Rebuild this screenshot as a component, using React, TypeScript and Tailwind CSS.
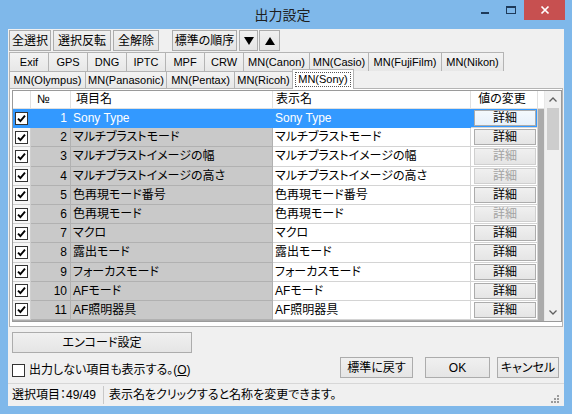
import React from "react";

type Row = { no: number; name: string; enabled: boolean };

const rows: Row[] = [
  { no: 1, name: "Sony Type", enabled: true },
  { no: 2, name: "マルチブラストモード", enabled: true },
  { no: 3, name: "マルチブラストイメージの幅", enabled: false },
  { no: 4, name: "マルチブラストイメージの高さ", enabled: false },
  { no: 5, name: "色再現モード番号", enabled: true },
  { no: 6, name: "色再現モード", enabled: false },
  { no: 7, name: "マクロ", enabled: true },
  { no: 8, name: "露出モード", enabled: true },
  { no: 9, name: "フォーカスモード", enabled: true },
  { no: 10, name: "AFモード", enabled: true },
  { no: 11, name: "AF照明器具", enabled: true },
];

const tabs1 = [
  { label: "Exif", w: "w-[40px]" },
  { label: "GPS", w: "w-[40px]" },
  { label: "DNG", w: "w-[40px]" },
  { label: "IPTC", w: "w-[40px]" },
  { label: "MPF", w: "w-[40px]" },
  { label: "CRW", w: "w-[40px]" },
  { label: "MN(Canon)", w: "w-[67px]" },
  { label: "MN(Casio)", w: "w-[60px]" },
  { label: "MN(FujiFilm)", w: "w-[74px]" },
  { label: "MN(Nikon)", w: "w-[63px]" },
];

const tabs2 = [
  { label: "MN(Olympus)", w: "w-[77px]" },
  { label: "MN(Panasonic)", w: "w-[82px]" },
  { label: "MN(Pentax)", w: "w-[69px]" },
  { label: "MN(Ricoh)", w: "w-[59px]" },
];

const Btn = ({
  children,
  className = "",
}: {
  children: React.ReactNode;
  className?: string;
}) => (
  <div
    className={`flex items-center justify-center whitespace-nowrap border border-[#acacac] bg-gradient-to-b from-[#f0f0f0] to-[#e5e5e5] text-[12px] leading-none ${className}`}
  >
    {children}
  </div>
);

const Check = ({ checked }: { checked: boolean }) => (
  <span className="flex h-[13px] w-[13px] items-center justify-center border border-[#333333] bg-white">
    {checked && (
      <svg width="9" height="9" viewBox="0 0 9 9">
        <path d="M1 4.6 L3.4 7 L8 1.6" stroke="#000" strokeWidth="1.9" fill="none" />
      </svg>
    )}
  </span>
);

const Tab = ({ label, w }: { label: string; w: string }) => (
  <div
    className={`${w} -ml-px flex h-full items-center justify-center whitespace-nowrap border border-b-0 border-[#b4b4b4] bg-gradient-to-b from-[#f3f3f3] to-[#e7e7e7] text-[11px] leading-none first:ml-0`}
  >
    {label}
  </div>
);

export default function App() {
  return (
    <div className="flex h-[414px] w-[572px] flex-col overflow-hidden bg-[#7fb8ea] font-['Liberation_Sans','Noto_Sans_CJK_JP',sans-serif] text-black [font-feature-settings:'palt']">
      {/* title bar */}
      <div className="flex h-[29px] items-start">
        <div className="flex-1" />
        <div className="pt-[4px] font-['Noto_Sans_CJK_JP',sans-serif] text-[14px] leading-[20px] text-[#1e1e1e] [font-feature-settings:normal]">
          出力設定
        </div>
        <div className="flex flex-1 justify-end pr-[7px]">
          <div className="flex h-[20px] w-[26px] items-center justify-center">
            <span className="mt-[6px] h-[2px] w-[8px] bg-[#1e3a5a]" />
          </div>
          <div className="flex h-[20px] w-[26px] items-center justify-center">
            <span className="h-[8px] w-[10px] border border-t-2 border-[#1e3a5a]" />
          </div>
          <div className="flex h-[20px] w-[41px] items-center justify-center bg-[#c75050]">
            <svg width="10" height="10" viewBox="0 0 10 10">
              <path d="M1.5 1.5 L8.5 8.5 M8.5 1.5 L1.5 8.5" stroke="#fff" strokeWidth="1.7" />
            </svg>
          </div>
        </div>
      </div>

      {/* client */}
      <div className="mx-[8px] mb-[8px] flex flex-1 flex-col bg-[#f0f0f0]">
        {/* toolbar */}
        <div className="ml-[1px] mt-[1px] flex h-[21px]">
          <Btn className="w-[42px]">全選択</Btn>
          <Btn className="ml-[2px] w-[58px]">選択反転</Btn>
          <Btn className="ml-[2px] w-[46px]">全解除</Btn>
          <Btn className="ml-[13px] w-[65px]">標準の順序</Btn>
          <Btn className="ml-[2px] w-[19px]">
            <svg width="10" height="8" viewBox="0 0 10 8">
              <path d="M0 0 H10 L5 8 Z" fill="#000" />
            </svg>
          </Btn>
          <Btn className="ml-[1px] w-[21px]">
            <svg width="10" height="8" viewBox="0 0 10 8">
              <path d="M0 8 H10 L5 0 Z" fill="#000" />
            </svg>
          </Btn>
        </div>

        {/* tabs */}
        <div className="ml-[1px] mt-[1px] flex h-[19px]">
          {tabs1.map((t) => (
            <Tab key={t.label} {...t} />
          ))}
        </div>
        <div className="ml-[1px] flex h-[17px] items-end">
          {tabs2.map((t) => (
            <Tab key={t.label} {...t} />
          ))}
          <div className="relative z-10 -mb-px -ml-px flex h-[20px] w-[62px] items-center justify-center border border-b-0 border-[#b4b4b4] bg-white">
            <span className="border border-dotted border-[#555] px-[2px] text-[11px] leading-[13px]">
              MN(Sony)
            </span>
          </div>
        </div>

        {/* tab panel */}
        <div className="ml-[1px] h-[239px] w-[554px] border border-[#b4b4b4] bg-white pl-[2px] pt-[1px]">
          <div className="flex h-[232px] w-[550px] overflow-hidden border border-[#9a9a9a] bg-[#ababab]">
            <div className="flex w-[531px] flex-col">
              {/* header */}
              <div className="flex h-[18px] shrink-0 bg-white text-[12px] leading-[17px]">
                <div className="w-[18px] border-b border-r border-[#e0e0e0]" />
                <div className="w-[40px] border-b border-r border-[#e0e0e0] pl-[6px]">№</div>
                <div className="w-[202px] border-b border-r border-[#e0e0e0] pl-[5px]">項目名</div>
                <div className="w-[198px] border-b border-r border-[#e0e0e0] pl-[3px]">表示名</div>
                <div className="w-[67px] border-b border-r border-[#e0e0e0] pr-[4px] text-center">値の変更</div>
                <div className="flex-1 border-b border-[#e0e0e0]" />
              </div>
              {rows.map((r) => {
                const sel = r.no === 1;
                return (
                  <div key={r.no} className="flex h-[19.2px] shrink-0 whitespace-nowrap text-[12px] leading-[18px]">
                    <div
                      className={`flex w-[18px] items-center justify-center border-b border-r ${
                        sel ? "border-[#3399ff] bg-[#3399ff]" : "border-[#cfcfcf] bg-[#f7f7f7]"
                      }`}
                    >
                      <Check checked />
                    </div>
                    <div
                      className={`w-[40px] border-b border-r pr-[3px] text-right ${
                        sel ? "border-[#3399ff] bg-[#3399ff] text-white" : "border-[#b1b1b1] bg-[#c9c9c9]"
                      }`}
                    >
                      {r.no}
                    </div>
                    <div
                      className={`w-[202px] border-b border-r pl-[2px] ${
                        sel ? "border-[#3399ff] bg-[#3399ff] text-white" : "border-[#b1b1b1] bg-[#c9c9c9]"
                      }`}
                    >
                      {r.name}
                    </div>
                    <div
                      className={`w-[198px] border-b border-r pl-[2px] ${
                        sel ? "border-[#3399ff] bg-[#3399ff] text-white" : "border-[#d4d4d4] bg-white"
                      }`}
                    >
                      {r.name}
                    </div>
                    <div
                      className={`flex w-[67px] items-center border-b border-r border-[#d4d4d4] py-[1px] pl-[3px] pr-[1px] ${
                        sel ? "bg-[#3399ff]" : "bg-white"
                      }`}
                    >
                      <Btn
                        className={`h-full w-full ${
                          sel ? "border-[#7eb4ea] from-[#f4f9fd] to-[#e8f1fa]" : ""
                        } ${r.enabled ? "" : "border-[#cfcfcf] text-[#a3a3a3]"}`}
                      >
                        詳細
                      </Btn>
                    </div>
                    <div className="flex-1" />
                  </div>
                );
              })}
            </div>
            {/* scrollbar */}
            <div className="flex w-[17px] flex-col border-l border-[#e8e8e8] bg-[#f0f0f0]">
              <div className="flex h-[17px] items-center justify-center">
                <svg width="8" height="5" viewBox="0 0 8 5">
                  <path d="M0.5 4.5 L4 1 L7.5 4.5" stroke="#606060" strokeWidth="1.3" fill="none" />
                </svg>
              </div>
              <div className="mx-[2px] h-[42px] bg-[#cdcdcd]" />
              <div className="flex-1" />
              <div className="flex h-[17px] items-center justify-center">
                <svg width="8" height="5" viewBox="0 0 8 5">
                  <path d="M0.5 0.5 L4 4 L7.5 0.5" stroke="#606060" strokeWidth="1.3" fill="none" />
                </svg>
              </div>
            </div>
          </div>
        </div>

        {/* encode button */}
        <Btn className="ml-[4px] mt-[5px] h-[21px] w-[180px]">エンコード設定</Btn>

        {/* options + buttons */}
        <div className="mt-[4px] flex h-[21px] items-end">
          <div className="mb-[1px] ml-[4px] flex items-center">
            <span className="h-[13px] w-[13px] border border-[#333333] bg-white" />
            <span className="ml-[4px] text-[12px] leading-[13px]">
              出力しない項目も表示する。(<span className="underline">O</span>)
            </span>
          </div>
          <div className="flex-1" />
          <Btn className="h-[21px] w-[73px]">標準に戻す</Btn>
          <Btn className="ml-[12px] h-[21px] w-[65px]">OK</Btn>
          <Btn className="ml-[7px] mr-[5px] h-[21px] w-[62px]">キャンセル</Btn>
        </div>

        {/* status bar */}
        <div className="mt-[5px] flex h-[23px] items-center whitespace-nowrap border-t border-[#d7d7d7] text-[12px] leading-none">
          <div className="w-[95px] pl-[4px]">選択項目：49/49</div>
          <div className="h-[18px] w-px bg-[#c8c8c8]" />
          <div className="flex-1 pl-[5px]">表示名をクリックすると名称を変更できます。</div>
          <svg width="10" height="10" viewBox="0 0 10 10" className="mr-[4px] mt-[8px]">
            <g fill="#9a9a9a">
              <rect x="7" y="1" width="2" height="2" />
              <rect x="4" y="4" width="2" height="2" />
              <rect x="7" y="4" width="2" height="2" />
              <rect x="1" y="7" width="2" height="2" />
              <rect x="4" y="7" width="2" height="2" />
              <rect x="7" y="7" width="2" height="2" />
            </g>
          </svg>
        </div>
      </div>
    </div>
  );
}
